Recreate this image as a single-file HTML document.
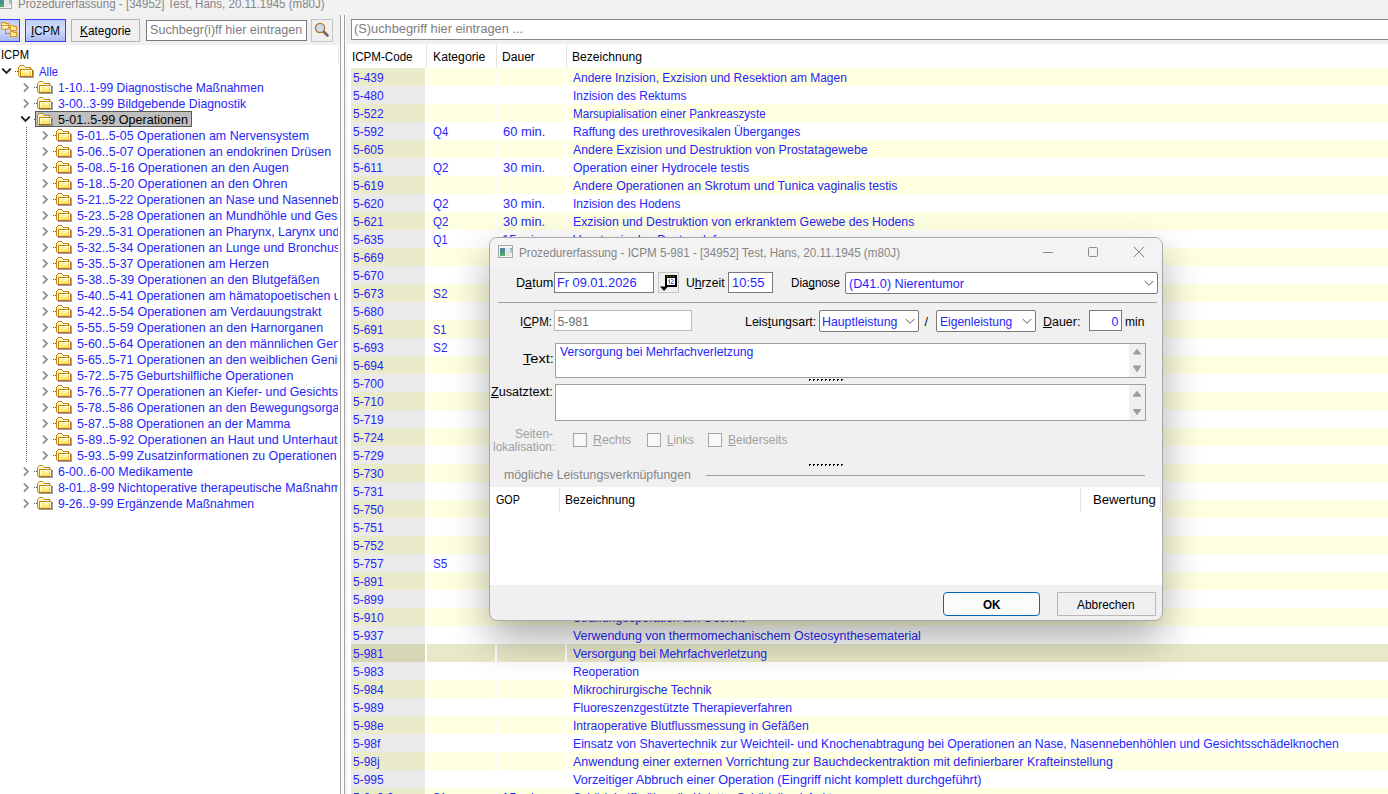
<!DOCTYPE html><html><head><meta charset="utf-8"><style>
*{box-sizing:border-box}
html,body{margin:0;padding:0}
body{width:1388px;height:794px;overflow:hidden;position:relative;background:#f0f0f0;font-family:"Liberation Sans",sans-serif;font-size:12px}
.t{position:absolute;white-space:nowrap;line-height:14px}
.r{position:absolute}
.u{text-decoration:underline;text-underline-offset:1px;text-decoration-skip-ink:none}
svg{position:absolute;display:block}
</style></head><body>
<div class="r" style="left:0px;top:0px;width:1388px;height:15px;background:#f2f2f2"></div>
<svg style="left:-3px;top:-4px" width="15" height="13" viewBox="0 0 15 13" shape-rendering="crispEdges">
<defs><linearGradient id="wg-3" x1="0" y1="0" x2="0.3" y2="1"><stop offset="0" stop-color="#5b86c0"/><stop offset=".45" stop-color="#3f8a8a"/><stop offset="1" stop-color="#55b060"/></linearGradient>
<linearGradient id="wh-3" x1="0" y1="0" x2="0" y2="1"><stop offset="0" stop-color="#8fb0dc"/><stop offset="1" stop-color="#b0e0b0"/></linearGradient></defs>
<rect x="0" y="0" width="15" height="13" fill="#a2a6ae"/>
<rect x="1" y="1" width="13" height="11" fill="#f4f4f4"/>
<rect x="2" y="3" width="5" height="8" fill="url(#wg-3)"/>
<rect x="7" y="3" width="1" height="8" fill="#ece6f0"/>
<rect x="8" y="3" width="4" height="8" fill="#e4e4e4"/>
<rect x="12" y="3" width="2" height="5" fill="url(#wh-3)"/>
</svg>
<div class="t " style="left:18.08px;top:-3px;font-size:12px;color:#858585;transform:scaleX(0.9631);transform-origin:0 0;">Prozedurerfassung - [34952] Test, Hans, 20.11.1945 (m80J)</div>
<div class="r" style="left:-1px;top:19px;width:21px;height:23px;border:1px solid #3b3bff;background:linear-gradient(#bccdf2,#d3defb 45%,#c9d2fb 60%,#aab9f0)"></div>
<svg style="left:0px;top:20px" width="19" height="19" viewBox="0 0 19 19">
<path d="M5.5 9 V13.5 H10.5 M8.5 7.5 H10.5" fill="none" stroke="#8c8c8c" stroke-width="1"/>
<path d="M1.5 2.5 h3 l1 1 h3 v5.5 h-7 z" fill="#fff2a0" stroke="#dc9628" stroke-width="1.2" stroke-linejoin="round"/>
<path d="M2.5 5.5 h6.5 l-1 3.5 h-7 z" fill="#fff8d0" stroke="#dc9628" stroke-width="1" stroke-linejoin="round"/>
<path d="M10.5 5.5 h2.5 l.8 .8 h2.7 v4.2 h-6 z" fill="#fff0a0" stroke="#dc9628" stroke-width="1.2" stroke-linejoin="round"/>
<path d="M10.5 11.5 h2.5 l.8 .8 h2.7 v4.2 h-6 z" fill="#fff0a0" stroke="#dc9628" stroke-width="1.2" stroke-linejoin="round"/>
</svg>
<div class="r" style="left:25px;top:19px;width:41px;height:23px;border:1px solid #3b3bff;background:linear-gradient(#bccdf2,#d3defb 45%,#c9d2fb 60%,#aab9f0)"></div>
<div class="t " style="left:31.15px;top:24px;font-size:12.3px;color:#000;transform:scaleX(0.9441);transform-origin:0 0;"><span class="u">I</span>CPM</div>
<div class="r" style="left:71px;top:19px;width:69px;height:23px;border:1px solid #b4b4b4;background:#f0f0f0"></div>
<div class="t " style="left:79.55px;top:24px;font-size:12px;color:#000;transform:scaleX(0.9908);transform-origin:0 0;"><span class="u">K</span>ategorie</div>
<div class="r" style="left:146px;top:20px;width:161px;height:21px;border:1px solid #7a7a7a;background:#fff"></div>
<div class="t " style="left:149.73px;top:23px;font-size:12.3px;color:#7d7d7d;transform:scaleX(1.0239);transform-origin:0 0;">Suchbegr(i)ff hier eintragen</div>
<div class="r" style="left:311px;top:19px;width:22px;height:23px;border:1px solid #c4c4c4;background:#f0f0f0"></div>
<svg style="left:313px;top:21px" width="18" height="18" viewBox="0 0 18 18">
<line x1="10" y1="10" x2="14.5" y2="14.5" stroke="#6a6a60" stroke-width="2.6" stroke-linecap="round"/>
<circle cx="7" cy="7" r="4.6" fill="#c6dcf5" stroke="#b87810" stroke-width="1.3"/>
</svg>
<div class="r" style="left:340px;top:15px;width:1px;height:779px;background:#a0a0a0"></div>
<div class="r" style="left:341px;top:15px;width:3px;height:779px;background:#fcfcfc"></div>
<div class="r" style="left:344px;top:15px;width:1px;height:779px;background:#a0a0a0"></div>
<div class="r" style="left:345px;top:15px;width:1px;height:779px;background:#fcfcfc"></div>
<div class="r" style="left:0px;top:45px;width:340px;height:749px;background:#fff"></div>
<div class="r" style="left:338px;top:45px;width:1px;height:18px;background:#e4e4e4"></div>
<div class="t " style="left:1.29px;top:48px;font-size:12.4px;color:#000;transform:scaleX(0.9018);transform-origin:0 0;">ICPM</div>
<svg width="0" height="0" style="left:0;top:0"><defs><g id="fold"><rect x="2" y="0" width="4" height="1" fill="#c58714"/><rect x="1" y="1" width="1" height="1" fill="#c58714"/><rect x="2" y="1" width="4" height="1" fill="#fffdf0"/><rect x="6" y="1" width="1" height="1" fill="#c58714"/><rect x="0" y="2" width="1" height="1" fill="#c58714"/><rect x="1" y="2" width="1" height="1" fill="#fffdf0"/><rect x="2" y="2" width="4" height="1" fill="#fff3a0"/><rect x="6" y="2" width="1" height="1" fill="#fffdf0"/><rect x="7" y="2" width="6" height="1" fill="#c58714"/><rect x="0" y="3" width="1" height="1" fill="#c58714"/><rect x="1" y="3" width="6" height="1" fill="#fff3a0"/><rect x="7" y="3" width="5" height="1" fill="#fffdf0"/><rect x="12" y="3" width="1" height="1" fill="#c58714"/><rect x="13" y="3" width="1" height="1" fill="#c0c4cc" opacity=".75"/><rect x="0" y="4" width="1" height="1" fill="#c58714"/><rect x="1" y="4" width="1" height="1" fill="#fff3a0"/><rect x="2" y="4" width="12" height="1" fill="#c58714"/><rect x="14" y="4" width="1" height="1" fill="#c0c4cc" opacity=".75"/><rect x="0" y="5" width="1" height="1" fill="#c58714"/><rect x="1" y="5" width="1" height="1" fill="#fff3a0"/><rect x="2" y="5" width="1" height="1" fill="#c58714"/><rect x="3" y="5" width="11" height="1" fill="#fffdf0"/><rect x="14" y="5" width="1" height="1" fill="#b27410"/><rect x="15" y="5" width="1" height="1" fill="#7a808c" opacity=".75"/><rect x="0" y="6" width="1" height="1" fill="#c58714"/><rect x="1" y="6" width="1" height="1" fill="#fff3a0"/><rect x="2" y="6" width="1" height="1" fill="#c58714"/><rect x="3" y="6" width="1" height="1" fill="#fffbc8"/><rect x="4" y="6" width="8" height="1" fill="#fff59a"/><rect x="12" y="6" width="1" height="1" fill="#f2c45a"/><rect x="13" y="6" width="1" height="1" fill="#fffbc8"/><rect x="14" y="6" width="1" height="1" fill="#b27410"/><rect x="15" y="6" width="1" height="1" fill="#7a808c" opacity=".75"/><rect x="0" y="7" width="1" height="1" fill="#c58714"/><rect x="1" y="7" width="1" height="1" fill="#fff3a0"/><rect x="2" y="7" width="1" height="1" fill="#c58714"/><rect x="3" y="7" width="1" height="1" fill="#fffbc8"/><rect x="4" y="7" width="8" height="1" fill="#fff59a"/><rect x="12" y="7" width="1" height="1" fill="#f2c45a"/><rect x="13" y="7" width="1" height="1" fill="#fffbc8"/><rect x="14" y="7" width="1" height="1" fill="#b27410"/><rect x="15" y="7" width="1" height="1" fill="#7a808c" opacity=".75"/><rect x="0" y="8" width="1" height="1" fill="#c58714"/><rect x="1" y="8" width="1" height="1" fill="#fff3a0"/><rect x="2" y="8" width="1" height="1" fill="#c58714"/><rect x="3" y="8" width="1" height="1" fill="#fffbc8"/><rect x="4" y="8" width="8" height="1" fill="#ffe77a"/><rect x="12" y="8" width="1" height="1" fill="#f2c45a"/><rect x="13" y="8" width="1" height="1" fill="#fffbc8"/><rect x="14" y="8" width="1" height="1" fill="#b27410"/><rect x="15" y="8" width="1" height="1" fill="#7a808c" opacity=".75"/><rect x="0" y="9" width="1" height="1" fill="#c58714"/><rect x="1" y="9" width="1" height="1" fill="#fff3a0"/><rect x="2" y="9" width="1" height="1" fill="#c58714"/><rect x="3" y="9" width="1" height="1" fill="#fffbc8"/><rect x="4" y="9" width="8" height="1" fill="#ffe77a"/><rect x="12" y="9" width="1" height="1" fill="#f2c45a"/><rect x="13" y="9" width="1" height="1" fill="#fffbc8"/><rect x="14" y="9" width="1" height="1" fill="#b27410"/><rect x="15" y="9" width="1" height="1" fill="#7a808c" opacity=".75"/><rect x="0" y="10" width="1" height="1" fill="#c58714"/><rect x="1" y="10" width="1" height="1" fill="#fff3a0"/><rect x="2" y="10" width="1" height="1" fill="#c58714"/><rect x="3" y="10" width="1" height="1" fill="#fffbc8"/><rect x="4" y="10" width="8" height="1" fill="#ffd860"/><rect x="12" y="10" width="1" height="1" fill="#f2c45a"/><rect x="13" y="10" width="1" height="1" fill="#fffbc8"/><rect x="14" y="10" width="1" height="1" fill="#b27410"/><rect x="15" y="10" width="1" height="1" fill="#7a808c" opacity=".75"/><rect x="1" y="11" width="1" height="1" fill="#c58714"/><rect x="2" y="11" width="13" height="1" fill="#b27410"/><rect x="15" y="11" width="1" height="1" fill="#7a808c" opacity=".75"/><rect x="2" y="12" width="14" height="1" fill="#7a808c" opacity=".75"/></g><linearGradient id="fg" x1="0" y1="0" x2="0" y2="1"><stop offset="0" stop-color="#fff8a8"/><stop offset="1" stop-color="#ffd75a"/></linearGradient></defs></svg>
<div class="r" style="left:0;top:45px;width:338px;height:749px;overflow:hidden">
<div class="r" style="left:26px;top:82px;width:1px;height:335px;background:repeating-linear-gradient(#6a6a6a 0 1px,transparent 1px 2px)"></div>
<div class="r" style="left:15px;top:26px;width:1px;height:1px;background:#505060"></div>
<div class="r" style="left:17px;top:26px;width:1px;height:1px;background:#505060"></div>
<svg style="left:1px;top:23px" width="11" height="7" viewBox="0 0 11 7"><path d="M1.3 0.6 L5.5 4.8 L9.7 0.6" fill="none" stroke="#1e1e1e" stroke-width="1.9"/></svg>
<svg style="left:18px;top:20px" width="16" height="13" viewBox="0 0 16 13" shape-rendering="crispEdges"><use href="#fold"/></svg>
<div class="t " style="left:38.90px;top:20px;font-size:12.4px;color:#2626fa;transform:scaleX(0.9209);transform-origin:0 0;">Alle</div>
<div class="r" style="left:34px;top:42px;width:1px;height:1px;background:#505060"></div>
<div class="r" style="left:36px;top:42px;width:1px;height:1px;background:#505060"></div>
<svg style="left:23px;top:38px" width="7" height="10" viewBox="0 0 7 10"><path d="M0.9 0.5 L5 4.6 L0.9 8.7" fill="none" stroke="#8c8c8c" stroke-width="1.7"/></svg>
<svg style="left:37px;top:36px" width="16" height="13" viewBox="0 0 16 13" shape-rendering="crispEdges"><use href="#fold"/></svg>
<div class="t " style="left:57.90px;top:36px;font-size:12.4px;color:#2626fa;transform:scaleX(0.9756);transform-origin:0 0;">1-10..1-99 Diagnostische Maßnahmen</div>
<div class="r" style="left:34px;top:58px;width:1px;height:1px;background:#505060"></div>
<div class="r" style="left:36px;top:58px;width:1px;height:1px;background:#505060"></div>
<svg style="left:23px;top:54px" width="7" height="10" viewBox="0 0 7 10"><path d="M0.9 0.5 L5 4.6 L0.9 8.7" fill="none" stroke="#8c8c8c" stroke-width="1.7"/></svg>
<svg style="left:37px;top:52px" width="16" height="13" viewBox="0 0 16 13" shape-rendering="crispEdges"><use href="#fold"/></svg>
<div class="t " style="left:57.90px;top:52px;font-size:12.4px;color:#2626fa;transform:scaleX(0.9891);transform-origin:0 0;">3-00..3-99 Bildgebende Diagnostik</div>
<div class="r" style="left:34px;top:74px;width:1px;height:1px;background:#505060"></div>
<div class="r" style="left:36px;top:74px;width:1px;height:1px;background:#505060"></div>
<svg style="left:20px;top:71px" width="11" height="7" viewBox="0 0 11 7"><path d="M1.3 0.6 L5.5 4.8 L9.7 0.6" fill="none" stroke="#1e1e1e" stroke-width="1.9"/></svg>
<div class="r" style="left:35px;top:66px;width:157px;height:16px;border:1px solid #5a5a5a;background:#bfbfbf"></div>
<svg style="left:37px;top:68px" width="16" height="13" viewBox="0 0 16 13" shape-rendering="crispEdges"><use href="#fold"/></svg>
<div class="t " style="left:57.90px;top:68px;font-size:12.4px;color:#000;transform:scaleX(1.0148);transform-origin:0 0;">5-01..5-99 Operationen</div>
<div class="r" style="left:53px;top:90px;width:1px;height:1px;background:#505060"></div>
<div class="r" style="left:55px;top:90px;width:1px;height:1px;background:#505060"></div>
<svg style="left:42px;top:86px" width="7" height="10" viewBox="0 0 7 10"><path d="M0.9 0.5 L5 4.6 L0.9 8.7" fill="none" stroke="#8c8c8c" stroke-width="1.7"/></svg>
<svg style="left:56px;top:84px" width="16" height="13" viewBox="0 0 16 13" shape-rendering="crispEdges"><use href="#fold"/></svg>
<div class="t " style="left:76.90px;top:84px;font-size:12.4px;color:#2626fa;transform:scaleX(1.0029);transform-origin:0 0;">5-01..5-05 Operationen am Nervensystem</div>
<div class="r" style="left:53px;top:106px;width:1px;height:1px;background:#505060"></div>
<div class="r" style="left:55px;top:106px;width:1px;height:1px;background:#505060"></div>
<svg style="left:42px;top:102px" width="7" height="10" viewBox="0 0 7 10"><path d="M0.9 0.5 L5 4.6 L0.9 8.7" fill="none" stroke="#8c8c8c" stroke-width="1.7"/></svg>
<svg style="left:56px;top:100px" width="16" height="13" viewBox="0 0 16 13" shape-rendering="crispEdges"><use href="#fold"/></svg>
<div class="t " style="left:76.90px;top:100px;font-size:12.4px;color:#2626fa;transform:scaleX(1.0026);transform-origin:0 0;">5-06..5-07 Operationen an endokrinen Drüsen</div>
<div class="r" style="left:53px;top:122px;width:1px;height:1px;background:#505060"></div>
<div class="r" style="left:55px;top:122px;width:1px;height:1px;background:#505060"></div>
<svg style="left:42px;top:118px" width="7" height="10" viewBox="0 0 7 10"><path d="M0.9 0.5 L5 4.6 L0.9 8.7" fill="none" stroke="#8c8c8c" stroke-width="1.7"/></svg>
<svg style="left:56px;top:116px" width="16" height="13" viewBox="0 0 16 13" shape-rendering="crispEdges"><use href="#fold"/></svg>
<div class="t " style="left:76.90px;top:116px;font-size:12.4px;color:#2626fa;transform:scaleX(1.0184);transform-origin:0 0;">5-08..5-16 Operationen an den Augen</div>
<div class="r" style="left:53px;top:138px;width:1px;height:1px;background:#505060"></div>
<div class="r" style="left:55px;top:138px;width:1px;height:1px;background:#505060"></div>
<svg style="left:42px;top:134px" width="7" height="10" viewBox="0 0 7 10"><path d="M0.9 0.5 L5 4.6 L0.9 8.7" fill="none" stroke="#8c8c8c" stroke-width="1.7"/></svg>
<svg style="left:56px;top:132px" width="16" height="13" viewBox="0 0 16 13" shape-rendering="crispEdges"><use href="#fold"/></svg>
<div class="t " style="left:76.90px;top:132px;font-size:12.4px;color:#2626fa;transform:scaleX(1.0150);transform-origin:0 0;">5-18..5-20 Operationen an den Ohren</div>
<div class="r" style="left:53px;top:154px;width:1px;height:1px;background:#505060"></div>
<div class="r" style="left:55px;top:154px;width:1px;height:1px;background:#505060"></div>
<svg style="left:42px;top:150px" width="7" height="10" viewBox="0 0 7 10"><path d="M0.9 0.5 L5 4.6 L0.9 8.7" fill="none" stroke="#8c8c8c" stroke-width="1.7"/></svg>
<svg style="left:56px;top:148px" width="16" height="13" viewBox="0 0 16 13" shape-rendering="crispEdges"><use href="#fold"/></svg>
<div class="t " style="left:76.90px;top:148px;font-size:12.4px;color:#2626fa;">5-21..5-22 Operationen an Nase und Nasennebenhöhlen</div>
<div class="r" style="left:53px;top:170px;width:1px;height:1px;background:#505060"></div>
<div class="r" style="left:55px;top:170px;width:1px;height:1px;background:#505060"></div>
<svg style="left:42px;top:166px" width="7" height="10" viewBox="0 0 7 10"><path d="M0.9 0.5 L5 4.6 L0.9 8.7" fill="none" stroke="#8c8c8c" stroke-width="1.7"/></svg>
<svg style="left:56px;top:164px" width="16" height="13" viewBox="0 0 16 13" shape-rendering="crispEdges"><use href="#fold"/></svg>
<div class="t " style="left:76.90px;top:164px;font-size:12.4px;color:#2626fa;">5-23..5-28 Operationen an Mundhöhle und Gesicht</div>
<div class="r" style="left:53px;top:186px;width:1px;height:1px;background:#505060"></div>
<div class="r" style="left:55px;top:186px;width:1px;height:1px;background:#505060"></div>
<svg style="left:42px;top:182px" width="7" height="10" viewBox="0 0 7 10"><path d="M0.9 0.5 L5 4.6 L0.9 8.7" fill="none" stroke="#8c8c8c" stroke-width="1.7"/></svg>
<svg style="left:56px;top:180px" width="16" height="13" viewBox="0 0 16 13" shape-rendering="crispEdges"><use href="#fold"/></svg>
<div class="t " style="left:76.90px;top:180px;font-size:12.4px;color:#2626fa;">5-29..5-31 Operationen an Pharynx, Larynx und Trachea</div>
<div class="r" style="left:53px;top:202px;width:1px;height:1px;background:#505060"></div>
<div class="r" style="left:55px;top:202px;width:1px;height:1px;background:#505060"></div>
<svg style="left:42px;top:198px" width="7" height="10" viewBox="0 0 7 10"><path d="M0.9 0.5 L5 4.6 L0.9 8.7" fill="none" stroke="#8c8c8c" stroke-width="1.7"/></svg>
<svg style="left:56px;top:196px" width="16" height="13" viewBox="0 0 16 13" shape-rendering="crispEdges"><use href="#fold"/></svg>
<div class="t " style="left:76.90px;top:196px;font-size:12.4px;color:#2626fa;">5-32..5-34 Operationen an Lunge und Bronchus</div>
<div class="r" style="left:53px;top:218px;width:1px;height:1px;background:#505060"></div>
<div class="r" style="left:55px;top:218px;width:1px;height:1px;background:#505060"></div>
<svg style="left:42px;top:214px" width="7" height="10" viewBox="0 0 7 10"><path d="M0.9 0.5 L5 4.6 L0.9 8.7" fill="none" stroke="#8c8c8c" stroke-width="1.7"/></svg>
<svg style="left:56px;top:212px" width="16" height="13" viewBox="0 0 16 13" shape-rendering="crispEdges"><use href="#fold"/></svg>
<div class="t " style="left:76.90px;top:212px;font-size:12.4px;color:#2626fa;transform:scaleX(0.9983);transform-origin:0 0;">5-35..5-37 Operationen am Herzen</div>
<div class="r" style="left:53px;top:234px;width:1px;height:1px;background:#505060"></div>
<div class="r" style="left:55px;top:234px;width:1px;height:1px;background:#505060"></div>
<svg style="left:42px;top:230px" width="7" height="10" viewBox="0 0 7 10"><path d="M0.9 0.5 L5 4.6 L0.9 8.7" fill="none" stroke="#8c8c8c" stroke-width="1.7"/></svg>
<svg style="left:56px;top:228px" width="16" height="13" viewBox="0 0 16 13" shape-rendering="crispEdges"><use href="#fold"/></svg>
<div class="t " style="left:76.90px;top:228px;font-size:12.4px;color:#2626fa;transform:scaleX(1.0110);transform-origin:0 0;">5-38..5-39 Operationen an den Blutgefäßen</div>
<div class="r" style="left:53px;top:250px;width:1px;height:1px;background:#505060"></div>
<div class="r" style="left:55px;top:250px;width:1px;height:1px;background:#505060"></div>
<svg style="left:42px;top:246px" width="7" height="10" viewBox="0 0 7 10"><path d="M0.9 0.5 L5 4.6 L0.9 8.7" fill="none" stroke="#8c8c8c" stroke-width="1.7"/></svg>
<svg style="left:56px;top:244px" width="16" height="13" viewBox="0 0 16 13" shape-rendering="crispEdges"><use href="#fold"/></svg>
<div class="t " style="left:76.90px;top:244px;font-size:12.4px;color:#2626fa;">5-40..5-41 Operationen am hämatopoetischen und Lymphgefäßsystem</div>
<div class="r" style="left:53px;top:266px;width:1px;height:1px;background:#505060"></div>
<div class="r" style="left:55px;top:266px;width:1px;height:1px;background:#505060"></div>
<svg style="left:42px;top:262px" width="7" height="10" viewBox="0 0 7 10"><path d="M0.9 0.5 L5 4.6 L0.9 8.7" fill="none" stroke="#8c8c8c" stroke-width="1.7"/></svg>
<svg style="left:56px;top:260px" width="16" height="13" viewBox="0 0 16 13" shape-rendering="crispEdges"><use href="#fold"/></svg>
<div class="t " style="left:76.90px;top:260px;font-size:12.4px;color:#2626fa;transform:scaleX(1.0081);transform-origin:0 0;">5-42..5-54 Operationen am Verdauungstrakt</div>
<div class="r" style="left:53px;top:282px;width:1px;height:1px;background:#505060"></div>
<div class="r" style="left:55px;top:282px;width:1px;height:1px;background:#505060"></div>
<svg style="left:42px;top:278px" width="7" height="10" viewBox="0 0 7 10"><path d="M0.9 0.5 L5 4.6 L0.9 8.7" fill="none" stroke="#8c8c8c" stroke-width="1.7"/></svg>
<svg style="left:56px;top:276px" width="16" height="13" viewBox="0 0 16 13" shape-rendering="crispEdges"><use href="#fold"/></svg>
<div class="t " style="left:76.90px;top:276px;font-size:12.4px;color:#2626fa;transform:scaleX(1.0033);transform-origin:0 0;">5-55..5-59 Operationen an den Harnorganen</div>
<div class="r" style="left:53px;top:298px;width:1px;height:1px;background:#505060"></div>
<div class="r" style="left:55px;top:298px;width:1px;height:1px;background:#505060"></div>
<svg style="left:42px;top:294px" width="7" height="10" viewBox="0 0 7 10"><path d="M0.9 0.5 L5 4.6 L0.9 8.7" fill="none" stroke="#8c8c8c" stroke-width="1.7"/></svg>
<svg style="left:56px;top:292px" width="16" height="13" viewBox="0 0 16 13" shape-rendering="crispEdges"><use href="#fold"/></svg>
<div class="t " style="left:76.90px;top:292px;font-size:12.4px;color:#2626fa;">5-60..5-64 Operationen an den männlichen Genitalorganen</div>
<div class="r" style="left:53px;top:314px;width:1px;height:1px;background:#505060"></div>
<div class="r" style="left:55px;top:314px;width:1px;height:1px;background:#505060"></div>
<svg style="left:42px;top:310px" width="7" height="10" viewBox="0 0 7 10"><path d="M0.9 0.5 L5 4.6 L0.9 8.7" fill="none" stroke="#8c8c8c" stroke-width="1.7"/></svg>
<svg style="left:56px;top:308px" width="16" height="13" viewBox="0 0 16 13" shape-rendering="crispEdges"><use href="#fold"/></svg>
<div class="t " style="left:76.90px;top:308px;font-size:12.4px;color:#2626fa;">5-65..5-71 Operationen an den weiblichen Genitalorganen</div>
<div class="r" style="left:53px;top:330px;width:1px;height:1px;background:#505060"></div>
<div class="r" style="left:55px;top:330px;width:1px;height:1px;background:#505060"></div>
<svg style="left:42px;top:326px" width="7" height="10" viewBox="0 0 7 10"><path d="M0.9 0.5 L5 4.6 L0.9 8.7" fill="none" stroke="#8c8c8c" stroke-width="1.7"/></svg>
<svg style="left:56px;top:324px" width="16" height="13" viewBox="0 0 16 13" shape-rendering="crispEdges"><use href="#fold"/></svg>
<div class="t " style="left:76.90px;top:324px;font-size:12.4px;color:#2626fa;transform:scaleX(0.9967);transform-origin:0 0;">5-72..5-75 Geburtshilfliche Operationen</div>
<div class="r" style="left:53px;top:346px;width:1px;height:1px;background:#505060"></div>
<div class="r" style="left:55px;top:346px;width:1px;height:1px;background:#505060"></div>
<svg style="left:42px;top:342px" width="7" height="10" viewBox="0 0 7 10"><path d="M0.9 0.5 L5 4.6 L0.9 8.7" fill="none" stroke="#8c8c8c" stroke-width="1.7"/></svg>
<svg style="left:56px;top:340px" width="16" height="13" viewBox="0 0 16 13" shape-rendering="crispEdges"><use href="#fold"/></svg>
<div class="t " style="left:76.90px;top:340px;font-size:12.4px;color:#2626fa;">5-76..5-77 Operationen an Kiefer- und Gesichtsschädelknochen</div>
<div class="r" style="left:53px;top:362px;width:1px;height:1px;background:#505060"></div>
<div class="r" style="left:55px;top:362px;width:1px;height:1px;background:#505060"></div>
<svg style="left:42px;top:358px" width="7" height="10" viewBox="0 0 7 10"><path d="M0.9 0.5 L5 4.6 L0.9 8.7" fill="none" stroke="#8c8c8c" stroke-width="1.7"/></svg>
<svg style="left:56px;top:356px" width="16" height="13" viewBox="0 0 16 13" shape-rendering="crispEdges"><use href="#fold"/></svg>
<div class="t " style="left:76.90px;top:356px;font-size:12.4px;color:#2626fa;">5-78..5-86 Operationen an den Bewegungsorganen</div>
<div class="r" style="left:53px;top:378px;width:1px;height:1px;background:#505060"></div>
<div class="r" style="left:55px;top:378px;width:1px;height:1px;background:#505060"></div>
<svg style="left:42px;top:374px" width="7" height="10" viewBox="0 0 7 10"><path d="M0.9 0.5 L5 4.6 L0.9 8.7" fill="none" stroke="#8c8c8c" stroke-width="1.7"/></svg>
<svg style="left:56px;top:372px" width="16" height="13" viewBox="0 0 16 13" shape-rendering="crispEdges"><use href="#fold"/></svg>
<div class="t " style="left:76.90px;top:372px;font-size:12.4px;color:#2626fa;transform:scaleX(0.9929);transform-origin:0 0;">5-87..5-88 Operationen an der Mamma</div>
<div class="r" style="left:53px;top:394px;width:1px;height:1px;background:#505060"></div>
<div class="r" style="left:55px;top:394px;width:1px;height:1px;background:#505060"></div>
<svg style="left:42px;top:390px" width="7" height="10" viewBox="0 0 7 10"><path d="M0.9 0.5 L5 4.6 L0.9 8.7" fill="none" stroke="#8c8c8c" stroke-width="1.7"/></svg>
<svg style="left:56px;top:388px" width="16" height="13" viewBox="0 0 16 13" shape-rendering="crispEdges"><use href="#fold"/></svg>
<div class="t " style="left:76.90px;top:388px;font-size:12.4px;color:#2626fa;transform:scaleX(1.0134);transform-origin:0 0;">5-89..5-92 Operationen an Haut und Unterhaut</div>
<div class="r" style="left:53px;top:410px;width:1px;height:1px;background:#505060"></div>
<div class="r" style="left:55px;top:410px;width:1px;height:1px;background:#505060"></div>
<svg style="left:42px;top:406px" width="7" height="10" viewBox="0 0 7 10"><path d="M0.9 0.5 L5 4.6 L0.9 8.7" fill="none" stroke="#8c8c8c" stroke-width="1.7"/></svg>
<svg style="left:56px;top:404px" width="16" height="13" viewBox="0 0 16 13" shape-rendering="crispEdges"><use href="#fold"/></svg>
<div class="t " style="left:76.90px;top:404px;font-size:12.4px;color:#2626fa;transform:scaleX(0.9972);transform-origin:0 0;">5-93..5-99 Zusatzinformationen zu Operationen</div>
<div class="r" style="left:34px;top:426px;width:1px;height:1px;background:#505060"></div>
<div class="r" style="left:36px;top:426px;width:1px;height:1px;background:#505060"></div>
<svg style="left:23px;top:422px" width="7" height="10" viewBox="0 0 7 10"><path d="M0.9 0.5 L5 4.6 L0.9 8.7" fill="none" stroke="#8c8c8c" stroke-width="1.7"/></svg>
<svg style="left:37px;top:420px" width="16" height="13" viewBox="0 0 16 13" shape-rendering="crispEdges"><use href="#fold"/></svg>
<div class="t " style="left:57.90px;top:420px;font-size:12.4px;color:#2626fa;transform:scaleX(1.0055);transform-origin:0 0;">6-00..6-00 Medikamente</div>
<div class="r" style="left:34px;top:442px;width:1px;height:1px;background:#505060"></div>
<div class="r" style="left:36px;top:442px;width:1px;height:1px;background:#505060"></div>
<svg style="left:23px;top:438px" width="7" height="10" viewBox="0 0 7 10"><path d="M0.9 0.5 L5 4.6 L0.9 8.7" fill="none" stroke="#8c8c8c" stroke-width="1.7"/></svg>
<svg style="left:37px;top:436px" width="16" height="13" viewBox="0 0 16 13" shape-rendering="crispEdges"><use href="#fold"/></svg>
<div class="t " style="left:57.90px;top:436px;font-size:12.4px;color:#2626fa;">8-01..8-99 Nichtoperative therapeutische Maßnahmen</div>
<div class="r" style="left:34px;top:458px;width:1px;height:1px;background:#505060"></div>
<div class="r" style="left:36px;top:458px;width:1px;height:1px;background:#505060"></div>
<svg style="left:23px;top:454px" width="7" height="10" viewBox="0 0 7 10"><path d="M0.9 0.5 L5 4.6 L0.9 8.7" fill="none" stroke="#8c8c8c" stroke-width="1.7"/></svg>
<svg style="left:37px;top:452px" width="16" height="13" viewBox="0 0 16 13" shape-rendering="crispEdges"><use href="#fold"/></svg>
<div class="t " style="left:57.90px;top:452px;font-size:12.4px;color:#2626fa;transform:scaleX(0.9815);transform-origin:0 0;">9-26..9-99 Ergänzende Maßnahmen</div>
</div>
<div class="r" style="left:351px;top:19px;width:1040px;height:21px;border:1px solid #8a8a8a;border-right:none;background:#fff"></div>
<div class="t " style="left:354.43px;top:22px;font-size:12.3px;color:#7d7d7d;transform:scaleX(1.0408);transform-origin:0 0;">(S)uchbegriff hier eintragen ...</div>
<div class="r" style="left:347px;top:44px;width:1041px;height:750px;background:#fff"></div>
<div class="r" style="left:426px;top:44px;width:1px;height:24px;background:#e3e3e3"></div>
<div class="r" style="left:496px;top:44px;width:1px;height:24px;background:#e3e3e3"></div>
<div class="r" style="left:566px;top:44px;width:1px;height:24px;background:#e3e3e3"></div>
<div class="t " style="left:351.96px;top:50px;font-size:12px;color:#000;transform:scaleX(0.9659);transform-origin:0 0;">ICPM-Code</div>
<div class="t " style="left:432.52px;top:50px;font-size:12px;color:#000;transform:scaleX(1.0168);transform-origin:0 0;">Kategorie</div>
<div class="t " style="left:502.23px;top:50px;font-size:12px;color:#000;transform:scaleX(1.0063);transform-origin:0 0;">Dauer</div>
<div class="t " style="left:572.43px;top:50px;font-size:12px;color:#000;transform:scaleX(1.0086);transform-origin:0 0;">Bezeichnung</div>
<div class="r" style="left:351px;top:68px;width:74px;height:18px;background:#eaebcb"></div>
<div class="r" style="left:427px;top:68px;width:68px;height:18px;background:#ffffe1"></div>
<div class="r" style="left:497px;top:68px;width:68px;height:18px;background:#ffffe1"></div>
<div class="r" style="left:567px;top:68px;width:821px;height:18px;background:#ffffe1"></div>
<div class="t " style="left:353.02px;top:71px;font-size:12px;color:#2626fa;">5-439</div>
<div class="t " style="left:573.20px;top:71px;font-size:12px;color:#2626fa;transform:scaleX(0.9990);transform-origin:0 0;">Andere Inzision, Exzision und Resektion am Magen</div>
<div class="r" style="left:351px;top:86px;width:74px;height:18px;background:#eaeaea"></div>
<div class="t " style="left:353.02px;top:89px;font-size:12px;color:#2626fa;">5-480</div>
<div class="t " style="left:573.20px;top:89px;font-size:12px;color:#2626fa;transform:scaleX(0.9944);transform-origin:0 0;">Inzision des Rektums</div>
<div class="r" style="left:351px;top:104px;width:74px;height:18px;background:#eaebcb"></div>
<div class="r" style="left:427px;top:104px;width:68px;height:18px;background:#ffffe1"></div>
<div class="r" style="left:497px;top:104px;width:68px;height:18px;background:#ffffe1"></div>
<div class="r" style="left:567px;top:104px;width:821px;height:18px;background:#ffffe1"></div>
<div class="t " style="left:353.02px;top:107px;font-size:12px;color:#2626fa;">5-522</div>
<div class="t " style="left:573.20px;top:107px;font-size:12px;color:#2626fa;transform:scaleX(0.9690);transform-origin:0 0;">Marsupialisation einer Pankreaszyste</div>
<div class="r" style="left:351px;top:122px;width:74px;height:18px;background:#eaeaea"></div>
<div class="t " style="left:353.02px;top:125px;font-size:12px;color:#2626fa;">5-592</div>
<div class="t " style="left:433.09px;top:125px;font-size:12px;color:#2626fa;transform:scaleX(0.9524);transform-origin:0 0;">Q4</div>
<div class="t " style="left:502.66px;top:125px;font-size:12px;color:#2626fa;transform:scaleX(1.0739);transform-origin:0 0;">60 min.</div>
<div class="t " style="left:573.20px;top:125px;font-size:12px;color:#2626fa;transform:scaleX(1.0118);transform-origin:0 0;">Raffung des urethrovesikalen Überganges</div>
<div class="r" style="left:351px;top:140px;width:74px;height:18px;background:#eaebcb"></div>
<div class="r" style="left:427px;top:140px;width:68px;height:18px;background:#ffffe1"></div>
<div class="r" style="left:497px;top:140px;width:68px;height:18px;background:#ffffe1"></div>
<div class="r" style="left:567px;top:140px;width:821px;height:18px;background:#ffffe1"></div>
<div class="t " style="left:353.02px;top:143px;font-size:12px;color:#2626fa;">5-605</div>
<div class="t " style="left:573.20px;top:143px;font-size:12px;color:#2626fa;transform:scaleX(1.0274);transform-origin:0 0;">Andere Exzision und Destruktion von Prostatagewebe</div>
<div class="r" style="left:351px;top:158px;width:74px;height:18px;background:#eaeaea"></div>
<div class="t " style="left:353.02px;top:161px;font-size:12px;color:#2626fa;">5-611</div>
<div class="t " style="left:433.08px;top:161px;font-size:12px;color:#2626fa;transform:scaleX(0.9677);transform-origin:0 0;">Q2</div>
<div class="t " style="left:502.79px;top:161px;font-size:12px;color:#2626fa;transform:scaleX(1.0705);transform-origin:0 0;">30 min.</div>
<div class="t " style="left:573.20px;top:161px;font-size:12px;color:#2626fa;transform:scaleX(1.0281);transform-origin:0 0;">Operation einer Hydrocele testis</div>
<div class="r" style="left:351px;top:176px;width:74px;height:18px;background:#eaebcb"></div>
<div class="r" style="left:427px;top:176px;width:68px;height:18px;background:#ffffe1"></div>
<div class="r" style="left:497px;top:176px;width:68px;height:18px;background:#ffffe1"></div>
<div class="r" style="left:567px;top:176px;width:821px;height:18px;background:#ffffe1"></div>
<div class="t " style="left:353.02px;top:179px;font-size:12px;color:#2626fa;">5-619</div>
<div class="t " style="left:573.20px;top:179px;font-size:12px;color:#2626fa;transform:scaleX(1.0263);transform-origin:0 0;">Andere Operationen an Skrotum und Tunica vaginalis testis</div>
<div class="r" style="left:351px;top:194px;width:74px;height:18px;background:#eaeaea"></div>
<div class="t " style="left:353.02px;top:197px;font-size:12px;color:#2626fa;">5-620</div>
<div class="t " style="left:433.08px;top:197px;font-size:12px;color:#2626fa;transform:scaleX(0.9677);transform-origin:0 0;">Q2</div>
<div class="t " style="left:502.79px;top:197px;font-size:12px;color:#2626fa;transform:scaleX(1.0705);transform-origin:0 0;">30 min.</div>
<div class="t " style="left:573.20px;top:197px;font-size:12px;color:#2626fa;transform:scaleX(0.9941);transform-origin:0 0;">Inzision des Hodens</div>
<div class="r" style="left:351px;top:212px;width:74px;height:18px;background:#eaebcb"></div>
<div class="r" style="left:427px;top:212px;width:68px;height:18px;background:#ffffe1"></div>
<div class="r" style="left:497px;top:212px;width:68px;height:18px;background:#ffffe1"></div>
<div class="r" style="left:567px;top:212px;width:821px;height:18px;background:#ffffe1"></div>
<div class="t " style="left:353.02px;top:215px;font-size:12px;color:#2626fa;">5-621</div>
<div class="t " style="left:433.08px;top:215px;font-size:12px;color:#2626fa;transform:scaleX(0.9677);transform-origin:0 0;">Q2</div>
<div class="t " style="left:502.79px;top:215px;font-size:12px;color:#2626fa;transform:scaleX(1.0705);transform-origin:0 0;">30 min.</div>
<div class="t " style="left:573.20px;top:215px;font-size:12px;color:#2626fa;transform:scaleX(1.0234);transform-origin:0 0;">Exzision und Destruktion von erkranktem Gewebe des Hodens</div>
<div class="r" style="left:351px;top:230px;width:74px;height:18px;background:#eaeaea"></div>
<div class="t " style="left:353.02px;top:233px;font-size:12px;color:#2626fa;">5-635</div>
<div class="t " style="left:433.11px;top:233px;font-size:12px;color:#2626fa;transform:scaleX(0.9103);transform-origin:0 0;">Q1</div>
<div class="t " style="left:502.33px;top:233px;font-size:12px;color:#2626fa;transform:scaleX(1.0825);transform-origin:0 0;">15 min.</div>
<div class="t " style="left:573.20px;top:233px;font-size:12px;color:#2626fa;transform:scaleX(1.0286);transform-origin:0 0;">Vasotomie des Ductus deferens</div>
<div class="r" style="left:351px;top:248px;width:74px;height:18px;background:#eaebcb"></div>
<div class="r" style="left:427px;top:248px;width:68px;height:18px;background:#ffffe1"></div>
<div class="r" style="left:497px;top:248px;width:68px;height:18px;background:#ffffe1"></div>
<div class="r" style="left:567px;top:248px;width:821px;height:18px;background:#ffffe1"></div>
<div class="t " style="left:353.02px;top:251px;font-size:12px;color:#2626fa;">5-669</div>
<div class="t " style="left:573.20px;top:251px;font-size:12px;color:#2626fa;">Andere Operationen am Ductus deferens</div>
<div class="r" style="left:351px;top:266px;width:74px;height:18px;background:#eaeaea"></div>
<div class="t " style="left:353.02px;top:269px;font-size:12px;color:#2626fa;">5-670</div>
<div class="t " style="left:573.20px;top:269px;font-size:12px;color:#2626fa;">Dilatation des Zervikalkanals</div>
<div class="r" style="left:351px;top:284px;width:74px;height:18px;background:#eaebcb"></div>
<div class="r" style="left:427px;top:284px;width:68px;height:18px;background:#ffffe1"></div>
<div class="r" style="left:497px;top:284px;width:68px;height:18px;background:#ffffe1"></div>
<div class="r" style="left:567px;top:284px;width:821px;height:18px;background:#ffffe1"></div>
<div class="t " style="left:353.02px;top:287px;font-size:12px;color:#2626fa;">5-673</div>
<div class="t " style="left:433.07px;top:287px;font-size:12px;color:#2626fa;transform:scaleX(0.9852);transform-origin:0 0;">S2</div>
<div class="t " style="left:573.20px;top:287px;font-size:12px;color:#2626fa;">Amputation der Cervix uteri</div>
<div class="r" style="left:351px;top:302px;width:74px;height:18px;background:#eaeaea"></div>
<div class="t " style="left:353.02px;top:305px;font-size:12px;color:#2626fa;">5-680</div>
<div class="t " style="left:573.20px;top:305px;font-size:12px;color:#2626fa;">Inzision des Uterus</div>
<div class="r" style="left:351px;top:320px;width:74px;height:18px;background:#eaebcb"></div>
<div class="r" style="left:427px;top:320px;width:68px;height:18px;background:#ffffe1"></div>
<div class="r" style="left:497px;top:320px;width:68px;height:18px;background:#ffffe1"></div>
<div class="r" style="left:567px;top:320px;width:821px;height:18px;background:#ffffe1"></div>
<div class="t " style="left:353.02px;top:323px;font-size:12px;color:#2626fa;">5-691</div>
<div class="t " style="left:433.11px;top:323px;font-size:12px;color:#2626fa;transform:scaleX(0.9145);transform-origin:0 0;">S1</div>
<div class="t " style="left:573.20px;top:323px;font-size:12px;color:#2626fa;">Entfernung eines intrauterinen Fremdkörpers</div>
<div class="r" style="left:351px;top:338px;width:74px;height:18px;background:#eaeaea"></div>
<div class="t " style="left:353.02px;top:341px;font-size:12px;color:#2626fa;">5-693</div>
<div class="t " style="left:433.07px;top:341px;font-size:12px;color:#2626fa;transform:scaleX(0.9852);transform-origin:0 0;">S2</div>
<div class="t " style="left:573.20px;top:341px;font-size:12px;color:#2626fa;">Uterusrekonstruktion</div>
<div class="r" style="left:351px;top:356px;width:74px;height:18px;background:#eaebcb"></div>
<div class="r" style="left:427px;top:356px;width:68px;height:18px;background:#ffffe1"></div>
<div class="r" style="left:497px;top:356px;width:68px;height:18px;background:#ffffe1"></div>
<div class="r" style="left:567px;top:356px;width:821px;height:18px;background:#ffffe1"></div>
<div class="t " style="left:353.02px;top:359px;font-size:12px;color:#2626fa;">5-694</div>
<div class="t " style="left:573.20px;top:359px;font-size:12px;color:#2626fa;">Laparoskopische Uterosakralnervenresektion</div>
<div class="r" style="left:351px;top:374px;width:74px;height:18px;background:#eaeaea"></div>
<div class="t " style="left:353.02px;top:377px;font-size:12px;color:#2626fa;">5-700</div>
<div class="t " style="left:573.20px;top:377px;font-size:12px;color:#2626fa;">Kuldotomie</div>
<div class="r" style="left:351px;top:392px;width:74px;height:18px;background:#eaebcb"></div>
<div class="r" style="left:427px;top:392px;width:68px;height:18px;background:#ffffe1"></div>
<div class="r" style="left:497px;top:392px;width:68px;height:18px;background:#ffffe1"></div>
<div class="r" style="left:567px;top:392px;width:821px;height:18px;background:#ffffe1"></div>
<div class="t " style="left:353.02px;top:395px;font-size:12px;color:#2626fa;">5-710</div>
<div class="t " style="left:573.20px;top:395px;font-size:12px;color:#2626fa;">Inzision der Vulva</div>
<div class="r" style="left:351px;top:410px;width:74px;height:18px;background:#eaeaea"></div>
<div class="t " style="left:353.02px;top:413px;font-size:12px;color:#2626fa;">5-719</div>
<div class="t " style="left:573.20px;top:413px;font-size:12px;color:#2626fa;">Andere Operationen an der Vulva</div>
<div class="r" style="left:351px;top:428px;width:74px;height:18px;background:#eaebcb"></div>
<div class="r" style="left:427px;top:428px;width:68px;height:18px;background:#ffffe1"></div>
<div class="r" style="left:497px;top:428px;width:68px;height:18px;background:#ffffe1"></div>
<div class="r" style="left:567px;top:428px;width:821px;height:18px;background:#ffffe1"></div>
<div class="t " style="left:353.02px;top:431px;font-size:12px;color:#2626fa;">5-724</div>
<div class="t " style="left:573.20px;top:431px;font-size:12px;color:#2626fa;">Rotationsentbindung mit Forzeps</div>
<div class="r" style="left:351px;top:446px;width:74px;height:18px;background:#eaeaea"></div>
<div class="t " style="left:353.02px;top:449px;font-size:12px;color:#2626fa;">5-729</div>
<div class="t " style="left:573.20px;top:449px;font-size:12px;color:#2626fa;">Andere instrumentelle Entbindung</div>
<div class="r" style="left:351px;top:464px;width:74px;height:18px;background:#eaebcb"></div>
<div class="r" style="left:427px;top:464px;width:68px;height:18px;background:#ffffe1"></div>
<div class="r" style="left:497px;top:464px;width:68px;height:18px;background:#ffffe1"></div>
<div class="r" style="left:567px;top:464px;width:821px;height:18px;background:#ffffe1"></div>
<div class="t " style="left:353.02px;top:467px;font-size:12px;color:#2626fa;">5-730</div>
<div class="t " style="left:573.20px;top:467px;font-size:12px;color:#2626fa;">Künstliche Fruchtblasensprengung</div>
<div class="r" style="left:351px;top:482px;width:74px;height:18px;background:#eaeaea"></div>
<div class="t " style="left:353.02px;top:485px;font-size:12px;color:#2626fa;">5-731</div>
<div class="t " style="left:573.20px;top:485px;font-size:12px;color:#2626fa;">Andere operative Geburtseinleitung</div>
<div class="r" style="left:351px;top:500px;width:74px;height:18px;background:#eaebcb"></div>
<div class="r" style="left:427px;top:500px;width:68px;height:18px;background:#ffffe1"></div>
<div class="r" style="left:497px;top:500px;width:68px;height:18px;background:#ffffe1"></div>
<div class="r" style="left:567px;top:500px;width:821px;height:18px;background:#ffffe1"></div>
<div class="t " style="left:353.02px;top:503px;font-size:12px;color:#2626fa;">5-750</div>
<div class="t " style="left:573.20px;top:503px;font-size:12px;color:#2626fa;">Intrauterine Therapie des Feten</div>
<div class="r" style="left:351px;top:518px;width:74px;height:18px;background:#eaeaea"></div>
<div class="t " style="left:353.02px;top:521px;font-size:12px;color:#2626fa;">5-751</div>
<div class="t " style="left:573.20px;top:521px;font-size:12px;color:#2626fa;">Kürettage zur Beendigung der Schwangerschaft</div>
<div class="r" style="left:351px;top:536px;width:74px;height:18px;background:#eaebcb"></div>
<div class="r" style="left:427px;top:536px;width:68px;height:18px;background:#ffffe1"></div>
<div class="r" style="left:497px;top:536px;width:68px;height:18px;background:#ffffe1"></div>
<div class="r" style="left:567px;top:536px;width:821px;height:18px;background:#ffffe1"></div>
<div class="t " style="left:353.02px;top:539px;font-size:12px;color:#2626fa;">5-752</div>
<div class="t " style="left:573.20px;top:539px;font-size:12px;color:#2626fa;">Andere Operationen zur Beendigung der Schwangerschaft</div>
<div class="r" style="left:351px;top:554px;width:74px;height:18px;background:#eaeaea"></div>
<div class="t " style="left:353.02px;top:557px;font-size:12px;color:#2626fa;">5-757</div>
<div class="t " style="left:433.07px;top:557px;font-size:12px;color:#2626fa;transform:scaleX(0.9765);transform-origin:0 0;">S5</div>
<div class="t " style="left:573.20px;top:557px;font-size:12px;color:#2626fa;">Uterusexstirpation, geburtshilflich</div>
<div class="r" style="left:351px;top:572px;width:74px;height:18px;background:#eaebcb"></div>
<div class="r" style="left:427px;top:572px;width:68px;height:18px;background:#ffffe1"></div>
<div class="r" style="left:497px;top:572px;width:68px;height:18px;background:#ffffe1"></div>
<div class="r" style="left:567px;top:572px;width:821px;height:18px;background:#ffffe1"></div>
<div class="t " style="left:353.02px;top:575px;font-size:12px;color:#2626fa;">5-891</div>
<div class="t " style="left:573.20px;top:575px;font-size:12px;color:#2626fa;">Inzision eines Sinus pilonidalis</div>
<div class="r" style="left:351px;top:590px;width:74px;height:18px;background:#eaeaea"></div>
<div class="t " style="left:353.02px;top:593px;font-size:12px;color:#2626fa;">5-899</div>
<div class="t " style="left:573.20px;top:593px;font-size:12px;color:#2626fa;">Andere Exzision an Haut und Unterhaut</div>
<div class="r" style="left:351px;top:608px;width:74px;height:18px;background:#eaebcb"></div>
<div class="r" style="left:427px;top:608px;width:68px;height:18px;background:#ffffe1"></div>
<div class="r" style="left:497px;top:608px;width:68px;height:18px;background:#ffffe1"></div>
<div class="r" style="left:567px;top:608px;width:821px;height:18px;background:#ffffe1"></div>
<div class="t " style="left:353.02px;top:611px;font-size:12px;color:#2626fa;">5-910</div>
<div class="t " style="left:573.20px;top:611px;font-size:12px;color:#2626fa;transform:scaleX(1.0189);transform-origin:0 0;">Straffungsoperation am Gesicht</div>
<div class="r" style="left:351px;top:626px;width:74px;height:18px;background:#eaeaea"></div>
<div class="t " style="left:353.02px;top:629px;font-size:12px;color:#2626fa;">5-937</div>
<div class="t " style="left:573.20px;top:629px;font-size:12px;color:#2626fa;transform:scaleX(1.0326);transform-origin:0 0;">Verwendung von thermomechanischem Osteosynthesematerial</div>
<div class="r" style="left:351px;top:644px;width:74px;height:18px;background:#d6d7b6"></div>
<div class="r" style="left:427px;top:644px;width:68px;height:18px;background:#e8e9c9"></div>
<div class="r" style="left:497px;top:644px;width:68px;height:18px;background:#e8e9c9"></div>
<div class="r" style="left:567px;top:644px;width:821px;height:18px;background:#e8e9c9"></div>
<div class="t " style="left:353.02px;top:647px;font-size:12px;color:#2626fa;">5-981</div>
<div class="t " style="left:573.20px;top:647px;font-size:12px;color:#2626fa;transform:scaleX(1.0247);transform-origin:0 0;">Versorgung bei Mehrfachverletzung</div>
<div class="r" style="left:351px;top:662px;width:74px;height:18px;background:#eaeaea"></div>
<div class="t " style="left:353.02px;top:665px;font-size:12px;color:#2626fa;">5-983</div>
<div class="t " style="left:573.20px;top:665px;font-size:12px;color:#2626fa;transform:scaleX(1.0084);transform-origin:0 0;">Reoperation</div>
<div class="r" style="left:351px;top:680px;width:74px;height:18px;background:#eaebcb"></div>
<div class="r" style="left:427px;top:680px;width:68px;height:18px;background:#ffffe1"></div>
<div class="r" style="left:497px;top:680px;width:68px;height:18px;background:#ffffe1"></div>
<div class="r" style="left:567px;top:680px;width:821px;height:18px;background:#ffffe1"></div>
<div class="t " style="left:353.02px;top:683px;font-size:12px;color:#2626fa;">5-984</div>
<div class="t " style="left:573.20px;top:683px;font-size:12px;color:#2626fa;transform:scaleX(1.0057);transform-origin:0 0;">Mikrochirurgische Technik</div>
<div class="r" style="left:351px;top:698px;width:74px;height:18px;background:#eaeaea"></div>
<div class="t " style="left:353.02px;top:701px;font-size:12px;color:#2626fa;">5-989</div>
<div class="t " style="left:573.20px;top:701px;font-size:12px;color:#2626fa;transform:scaleX(1.0175);transform-origin:0 0;">Fluoreszenzgestützte Therapieverfahren</div>
<div class="r" style="left:351px;top:716px;width:74px;height:18px;background:#eaebcb"></div>
<div class="r" style="left:427px;top:716px;width:68px;height:18px;background:#ffffe1"></div>
<div class="r" style="left:497px;top:716px;width:68px;height:18px;background:#ffffe1"></div>
<div class="r" style="left:567px;top:716px;width:821px;height:18px;background:#ffffe1"></div>
<div class="t " style="left:353.02px;top:719px;font-size:12px;color:#2626fa;">5-98e</div>
<div class="t " style="left:573.20px;top:719px;font-size:12px;color:#2626fa;transform:scaleX(1.0100);transform-origin:0 0;">Intraoperative Blutflussmessung in Gefäßen</div>
<div class="r" style="left:351px;top:734px;width:74px;height:18px;background:#eaeaea"></div>
<div class="t " style="left:353.02px;top:737px;font-size:12px;color:#2626fa;">5-98f</div>
<div class="t " style="left:573.20px;top:737px;font-size:12px;color:#2626fa;transform:scaleX(1.0172);transform-origin:0 0;">Einsatz von Shavertechnik zur Weichteil- und Knochenabtragung bei Operationen an Nase, Nasennebenhöhlen und Gesichtsschädelknochen</div>
<div class="r" style="left:351px;top:752px;width:74px;height:18px;background:#eaebcb"></div>
<div class="r" style="left:427px;top:752px;width:68px;height:18px;background:#ffffe1"></div>
<div class="r" style="left:497px;top:752px;width:68px;height:18px;background:#ffffe1"></div>
<div class="r" style="left:567px;top:752px;width:821px;height:18px;background:#ffffe1"></div>
<div class="t " style="left:353.02px;top:755px;font-size:12px;color:#2626fa;">5-98j</div>
<div class="t " style="left:573.20px;top:755px;font-size:12px;color:#2626fa;transform:scaleX(1.0405);transform-origin:0 0;">Anwendung einer externen Vorrichtung zur Bauchdeckentraktion mit definierbarer Krafteinstellung</div>
<div class="r" style="left:351px;top:770px;width:74px;height:18px;background:#eaeaea"></div>
<div class="t " style="left:353.02px;top:773px;font-size:12px;color:#2626fa;">5-995</div>
<div class="t " style="left:573.20px;top:773px;font-size:12px;color:#2626fa;transform:scaleX(1.0564);transform-origin:0 0;">Vorzeitiger Abbruch einer Operation (Eingriff nicht komplett durchgeführt)</div>
<div class="r" style="left:351px;top:788px;width:74px;height:18px;background:#eaebcb"></div>
<div class="r" style="left:427px;top:788px;width:68px;height:18px;background:#ffffe1"></div>
<div class="r" style="left:497px;top:788px;width:68px;height:18px;background:#ffffe1"></div>
<div class="r" style="left:567px;top:788px;width:821px;height:18px;background:#ffffe1"></div>
<div class="t " style="left:353.02px;top:791px;font-size:12px;color:#2626fa;">5-9a0.0</div>
<div class="t " style="left:433.11px;top:791px;font-size:12px;color:#2626fa;transform:scaleX(0.9145);transform-origin:0 0;">S1</div>
<div class="t " style="left:502.33px;top:791px;font-size:12px;color:#2626fa;transform:scaleX(1.0825);transform-origin:0 0;">15 min.</div>
<div class="t " style="left:573.20px;top:791px;font-size:12px;color:#2626fa;">Schädelgriffe über die Kalotte, Schädelbasisfraktur</div>
<div class="r" style="left:489px;top:237px;width:674px;height:384px;border:1px solid #a9a9a9;border-radius:8px;background:#f0f0f0;box-shadow:0 18px 42px rgba(0,0,0,0.32);overflow:hidden">
</div>
<div class="r" style="left:490px;top:238px;width:672px;height:30px;background:#f3f3f3;border-radius:7px 7px 0 0"></div>
<svg style="left:498px;top:245px" width="15" height="13" viewBox="0 0 15 13" shape-rendering="crispEdges">
<defs><linearGradient id="wg498" x1="0" y1="0" x2="0.3" y2="1"><stop offset="0" stop-color="#5b86c0"/><stop offset=".45" stop-color="#3f8a8a"/><stop offset="1" stop-color="#55b060"/></linearGradient>
<linearGradient id="wh498" x1="0" y1="0" x2="0" y2="1"><stop offset="0" stop-color="#8fb0dc"/><stop offset="1" stop-color="#b0e0b0"/></linearGradient></defs>
<rect x="0" y="0" width="15" height="13" fill="#a2a6ae"/>
<rect x="1" y="1" width="13" height="11" fill="#f4f4f4"/>
<rect x="2" y="3" width="5" height="8" fill="url(#wg498)"/>
<rect x="7" y="3" width="1" height="8" fill="#ece6f0"/>
<rect x="8" y="3" width="4" height="8" fill="#e4e4e4"/>
<rect x="12" y="3" width="2" height="5" fill="url(#wh498)"/>
</svg>
<div class="t " style="left:518.87px;top:246px;font-size:12px;color:#858585;transform:scaleX(0.9694);transform-origin:0 0;">Prozedurerfassung - ICPM 5-981 - [34952] Test, Hans, 20.11.1945 (m80J)</div>
<div class="r" style="left:1043px;top:252px;width:10px;height:1px;background:#8a8a8a"></div>
<div class="r" style="left:1088px;top:247px;width:10px;height:10px;border:1px solid #8a8a8a;border-radius:1.5px"></div>
<svg style="left:1133px;top:246px" width="12" height="12" viewBox="0 0 12 12"><path d="M0.8 0.8 L11 11 M11 0.8 L0.8 11" stroke="#7a7a7a" stroke-width="1"/></svg>
<div class="t " style="left:515.59px;top:276px;font-size:12px;color:#000;transform:scaleX(1.0506);transform-origin:0 0;">D<span class="u">a</span>tum</div>
<div class="r" style="left:554px;top:272px;width:100px;height:21px;background:#fff;border:1px solid #7a7a7a"></div>
<div class="t " style="left:556.78px;top:276px;font-size:12.3px;color:#2626fa;transform:scaleX(1.0387);transform-origin:0 0;">Fr 09.01.2026</div>
<div class="r" style="left:658px;top:272px;width:21px;height:21px;background:#f0f0f0;border:1px solid #c4c4c4"></div>
<svg style="left:659px;top:273px" width="19" height="19" viewBox="0 0 19 19" shape-rendering="crispEdges">
<rect x="6" y="2" width="12" height="12" rx="1.5" fill="#000"/>
<rect x="8" y="5" width="8" height="7" fill="#fff"/>
<rect x="10" y="6" width="1" height="5" fill="#6a6ae8"/><rect x="9" y="7" width="1" height="1" fill="#9a9af0"/><rect x="12" y="6" width="2" height="1" fill="#6a6ae8"/><rect x="14" y="7" width="1" height="1" fill="#6a6ae8"/><rect x="13" y="8" width="1" height="1" fill="#6a6ae8"/><rect x="12" y="9" width="1" height="1" fill="#6a6ae8"/><rect x="12" y="10" width="3" height="1" fill="#6a6ae8"/>
<rect x="8" y="3" width="1" height="1" fill="#b0a000"/><rect x="11" y="3" width="1" height="1" fill="#b0a000"/><rect x="14" y="3" width="1" height="1" fill="#b0a000"/>
<path d="M1 13.5 H9 L5 18 Z" fill="#000" shape-rendering="geometricPrecision"/>
</svg>
<div class="t " style="left:686.29px;top:276px;font-size:12px;color:#000;transform:scaleX(1.0130);transform-origin:0 0;">U<span class="u">h</span>rzeit</div>
<div class="r" style="left:728px;top:272px;width:45px;height:21px;background:#fff;border:1px solid #7a7a7a"></div>
<div class="t " style="left:732.03px;top:276px;font-size:12.3px;color:#2626fa;transform:scaleX(1.0533);transform-origin:0 0;">10:55</div>
<div class="t " style="left:791.47px;top:276px;font-size:12px;color:#000;transform:scaleX(0.9675);transform-origin:0 0;">Dia<span class="u">g</span>nose</div>
<div class="r" style="left:845px;top:272px;width:313px;height:22px;background:#fff;border:1px solid #7a7a7a;border-radius:2px"></div>
<div class="t " style="left:848.74px;top:277px;font-size:12.3px;color:#2626fa;transform:scaleX(1.0267);transform-origin:0 0;">(D41.0) Nierentumor</div>
<svg style="left:1144px;top:280px" width="10" height="7" viewBox="0 0 10 7"><path d="M0.7 1 L5 5.3 L9.3 1" fill="none" stroke="#555" stroke-width="1"/></svg>
<div class="r" style="left:498px;top:302px;width:659px;height:1px;background:#a0a0a0"></div>
<div class="t " style="left:520.26px;top:315px;font-size:12px;color:#000;transform:scaleX(0.9602);transform-origin:0 0;">I<span class="u">C</span>PM:</div>
<div class="r" style="left:554px;top:310px;width:138px;height:21px;background:#fff;border:1px solid #b9b9b9"></div>
<div class="t " style="left:557.51px;top:315px;font-size:12.3px;color:#6d6d6d;">5-981</div>
<div class="t " style="left:745.30px;top:315px;font-size:12px;color:#000;transform:scaleX(1.0366);transform-origin:0 0;">Leis<span class="u">t</span>ungsart:</div>
<div class="r" style="left:819px;top:310px;width:100px;height:22px;background:#fff;border:1px solid #7a7a7a;border-radius:2px"></div>
<div class="t " style="left:822.41px;top:315px;font-size:12.3px;color:#2626fa;transform:scaleX(1.0023);transform-origin:0 0;">Hauptleistung</div>
<svg style="left:905px;top:318px" width="10" height="7" viewBox="0 0 10 7"><path d="M0.7 1 L5 5.3 L9.3 1" fill="none" stroke="#555" stroke-width="1"/></svg>
<div class="t " style="left:924.40px;top:315px;font-size:12.5px;color:#000;">/</div>
<div class="r" style="left:936px;top:310px;width:100px;height:22px;background:#fff;border:1px solid #7a7a7a;border-radius:2px"></div>
<div class="t " style="left:939.64px;top:315px;font-size:12.3px;color:#2626fa;transform:scaleX(0.9795);transform-origin:0 0;">Eigenleistung</div>
<svg style="left:1022px;top:318px" width="10" height="7" viewBox="0 0 10 7"><path d="M0.7 1 L5 5.3 L9.3 1" fill="none" stroke="#555" stroke-width="1"/></svg>
<div class="t " style="left:1043.30px;top:315px;font-size:12px;color:#000;transform:scaleX(1.0365);transform-origin:0 0;"><span class="u">D</span>auer:</div>
<div class="r" style="left:1089px;top:310px;width:33px;height:21px;background:#fff;border:1px solid #7a7a7a"></div>
<div class="t " style="left:1111.51px;top:315px;font-size:12.3px;color:#2626fa;">0</div>
<div class="t " style="left:1124.62px;top:315px;font-size:12px;color:#000;transform:scaleX(1.0023);transform-origin:0 0;">min</div>
<div class="r" style="left:555px;top:343px;width:591px;height:35px;background:#fff;border:1px solid #a0a0a0"></div>
<div class="r" style="left:1129px;top:344px;width:16px;height:33px;background:#f0f0f0"></div>
<svg style="left:1129px;top:344px" width="16" height="33" viewBox="0 0 16 33"><path d="M4.5 10 L8 5.6 L11.5 10Z" fill="#9e9e9e" stroke="#9e9e9e" stroke-width="1.2" stroke-linejoin="round"/><path d="M4.5 22 L8 27.4 L11.5 22Z" fill="#9e9e9e" stroke="#9e9e9e" stroke-width="1.2" stroke-linejoin="round"/></svg>
<div class="t " style="left:559.74px;top:345px;font-size:12.3px;color:#2626fa;transform:scaleX(0.9964);transform-origin:0 0;">Versorgung bei Mehrfachverletzung</div>
<div class="t " style="left:522.61px;top:352px;font-size:12px;color:#000;transform:scaleX(1.2208);transform-origin:0 0;"><span class="u">T</span>ext:</div>
<div class="r" style="left:809px;top:379px;width:35px;height:1px;background:repeating-linear-gradient(90deg,#000 0 2px,transparent 2px 4px)"></div>
<div class="r" style="left:809px;top:380px;width:35px;height:1px;background:repeating-linear-gradient(90deg,#000 0 1px,transparent 1px 4px)"></div>
<div class="r" style="left:809px;top:464px;width:35px;height:1px;background:repeating-linear-gradient(90deg,#000 0 2px,transparent 2px 4px)"></div>
<div class="r" style="left:809px;top:465px;width:35px;height:1px;background:repeating-linear-gradient(90deg,#000 0 1px,transparent 1px 4px)"></div>
<div class="r" style="left:555px;top:384px;width:591px;height:37px;background:#fff;border:1px solid #a0a0a0"></div>
<div class="r" style="left:1129px;top:385px;width:16px;height:35px;background:#f0f0f0"></div>
<svg style="left:1129px;top:385px" width="16" height="35" viewBox="0 0 16 35"><path d="M4.5 11.2 L8 6.6 L11.5 11.2Z" fill="#9e9e9e" stroke="#9e9e9e" stroke-width="1.2" stroke-linejoin="round"/><path d="M4.5 24.5 L8 29.3 L11.5 24.5Z" fill="#9e9e9e" stroke="#9e9e9e" stroke-width="1.2" stroke-linejoin="round"/></svg>
<div class="t " style="left:491.42px;top:385px;font-size:12px;color:#000;transform:scaleX(1.0517);transform-origin:0 0;"><span class="u">Z</span>usatztext:</div>
<div class="t " style="left:515.16px;top:427px;font-size:12px;color:#a0a0a0;transform:scaleX(1.0011);transform-origin:0 0;">Seiten-</div>
<div class="t " style="left:492.63px;top:440px;font-size:12px;color:#a0a0a0;transform:scaleX(0.9921);transform-origin:0 0;">lokalisation:</div>
<div class="r" style="left:573px;top:433px;width:14px;height:14px;border:1px solid #a5a5a5;background:#f8f8f8"></div>
<div class="r" style="left:647px;top:433px;width:14px;height:14px;border:1px solid #a5a5a5;background:#f8f8f8"></div>
<div class="r" style="left:708px;top:433px;width:14px;height:14px;border:1px solid #a5a5a5;background:#f8f8f8"></div>
<div class="t " style="left:592.92px;top:433px;font-size:12px;color:#a0a0a0;transform:scaleX(1.0239);transform-origin:0 0;"><span class="u">R</span>echts</div>
<div class="t " style="left:667.28px;top:433px;font-size:12px;color:#a0a0a0;transform:scaleX(0.9572);transform-origin:0 0;"><span class="u">L</span>inks</div>
<div class="t " style="left:728.04px;top:433px;font-size:12px;color:#a0a0a0;transform:scaleX(1.0007);transform-origin:0 0;"><span class="u">B</span>eiderseits</div>
<div class="t " style="left:504.40px;top:468px;font-size:12px;color:#858585;transform:scaleX(1.0258);transform-origin:0 0;">mögliche Leistungsverknüpfungen</div>
<div class="r" style="left:706px;top:475px;width:439px;height:1px;background:#a0a0a0"></div>
<div class="r" style="left:490px;top:487px;width:672px;height:98px;background:#fff"></div>
<div class="r" style="left:559px;top:487px;width:1px;height:24px;background:#e3e3e3"></div>
<div class="r" style="left:1080px;top:487px;width:1px;height:24px;background:#e3e3e3"></div>
<div class="r" style="left:1160px;top:487px;width:1px;height:24px;background:#e3e3e3"></div>
<div class="t " style="left:495.76px;top:493px;font-size:12px;color:#000;transform:scaleX(0.8923);transform-origin:0 0;">GOP</div>
<div class="t " style="left:565.43px;top:493px;font-size:12px;color:#000;transform:scaleX(1.0101);transform-origin:0 0;">Bezeichnung</div>
<div class="t " style="left:1092.75px;top:493px;font-size:12px;color:#000;transform:scaleX(1.0949);transform-origin:0 0;">Bewertung</div>
<div class="r" style="left:943px;top:592px;width:97px;height:24px;background:#fbfbfb;border:1px solid #0067c0;border-radius:4px"></div>
<div class="t " style="left:982.53px;top:598px;font-size:12px;color:#000;transform:scaleX(0.9770);transform-origin:0 0;font-weight:bold">OK</div>
<div class="r" style="left:1057px;top:592px;width:99px;height:24px;background:#f0f0f0;border:1px solid #b8b8b8"></div>
<div class="t " style="left:1077.40px;top:598px;font-size:12px;color:#000;transform:scaleX(0.9923);transform-origin:0 0;">Abbrechen</div>
</body></html>
